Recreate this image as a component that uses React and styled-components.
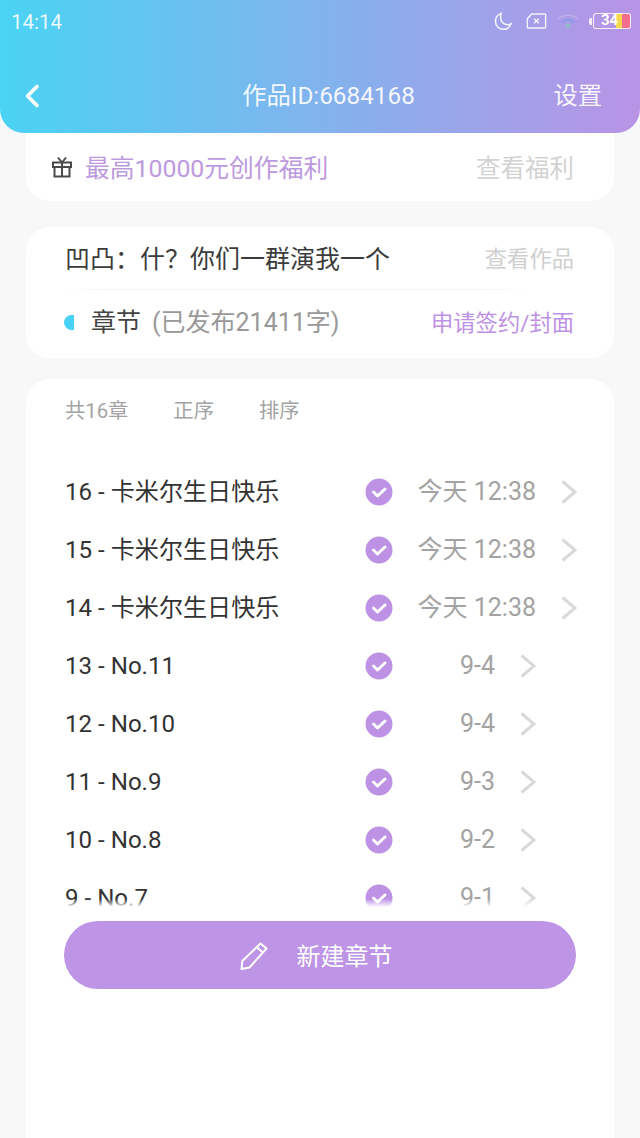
import React from "react";
import styled, { createGlobalStyle } from "styled-components";

const Global = createGlobalStyle`
  html, body { margin: 0; padding: 0; background: #f8f8f8; }
  body { font-family: Roboto, "Noto Sans CJK SC", sans-serif; line-height: 30px; }
  * { box-sizing: border-box; }
`;

const Page = styled.div`
  width: 640px;
  height: 1138px;
  overflow: hidden;
  display: flex;
  flex-direction: column;
  background: #f8f8f8;
`;

const Header = styled.header`
  position: relative;
  z-index: 2;
  height: 133px;
  flex: none;
  border-radius: 0 0 24px 24px;
  background: linear-gradient(90deg, #4ad3f4 0%, #b993e6 100%);
  color: #fff;
  display: flex;
  flex-direction: column;
`;

const StatusBar = styled.div`
  height: 44px;
  padding: 0 9px 2px 11px;
  display: flex;
  align-items: center;
  justify-content: space-between;
`;

const Time = styled.span`
  font-size: 20.5px;
  color: rgba(255, 255, 255, 0.88);
  margin-top: 2px;
`;

const StatusIcons = styled.div`
  display: flex;
  align-items: center;
`;

const Battery = styled.div`
  position: relative;
  width: 38px;
  height: 16px;
  margin-left: 1px;
  border: 1.5px solid rgba(255, 255, 255, 0.85);
  border-radius: 3px;
  overflow: hidden;
  background: linear-gradient(90deg, transparent 0 22px, #f6d84f 22px 28px, #f26d8e 28px);
  &::before {
    content: "34";
    position: absolute;
    left: 7px;
    top: -2px;
    font-size: 15px;
    line-height: 17px;
    font-weight: 700;
    color: #fff;
  }
`;

const BatteryTip = styled.span`
  width: 3px;
  height: 7px;
  margin-left: 10px;
  border-radius: 2px 0 0 2px;
  background: rgba(255, 255, 255, 0.85);
`;

const NavBar = styled.div`
  flex: 1;
  padding: 14px 38px 0 24px;
  display: flex;
  align-items: center;
  justify-content: space-between;
  font-size: 24.3px;
  color: rgba(255, 255, 255, 0.92);
`;

const NavTitle = styled.span`
  position: absolute;
  left: 0;
  right: 0;
  text-align: center;
  margin-left: 17px;
`;

const Cards = styled.main`
  flex: 1;
  min-height: 0;
  padding: 0 26px;
  display: flex;
  flex-direction: column;
`;

const PromoCard = styled.section`
  height: 68px;
  background: #fff;
  border-radius: 0 0 24px 24px;
  padding: 0 40px 0 26px;
  display: flex;
  align-items: center;
  font-size: 24.8px;
`;

const PromoText = styled.span`
  margin: 4px 0 0 13px;
  color: #bd9ade;
`;

const PromoLink = styled.span`
  margin: 4px 0 0 auto;
  font-size: 24.5px;
  color: #d2d2d2;
`;

const WorkCard = styled.section`
  margin-top: 26px;
  height: 131px;
  background: #fff;
  border-radius: 24px;
  padding: 0 40px 0 39px;
`;

const WorkRow = styled.div`
  height: 63px;
  display: flex;
  align-items: center;
  justify-content: space-between;
  border-bottom: 1px solid;
  border-image: linear-gradient(90deg, transparent, #f2f2f2 8%, #f2f2f2 80%, transparent 92%) 1;
  font-size: 25px;
  color: #3c3c3c;
`;

const WorkTitle = styled.span`
  margin-top: 4px;
`;

const WorkLink = styled.span`
  margin-top: 2px;
  font-size: 22.3px;
  color: #cfcfcf;
`;

const ChapterRow = styled.div`
  height: 65px;
  display: flex;
  align-items: center;
  font-size: 25px;
`;

const HalfDot = styled.span`
  width: 10px;
  height: 15px;
  margin: -1px 0 0 -1px;
  border-radius: 10px 0 0 10px;
  background: #48d2f4;
`;

const ChapterName = styled.span`
  margin-left: 17px;
  color: #444;
`;

const ChapterCount = styled.span`
  margin-left: 11px;
  color: #999;
`;

const ChapterLink = styled.span`
  margin-left: auto;
  font-size: 22.3px;
  color: #bd92e4;
`;

const ListCard = styled.section`
  margin-top: 21px;
  flex: 1;
  background: #fff;
  border-radius: 24px 24px 0 0;
  padding: 0 38px 0 39px;
`;

const ListHead = styled.div`
  height: 64px;
  display: flex;
  align-items: center;
  gap: 45px;
  font-size: 20.3px;
  color: #a3a3a3;
`;

const ListBody = styled.div`
  position: relative;
  height: 445px;
  margin: 20px -6px 0 0;
  overflow: hidden;
  &::after {
    content: "";
    position: absolute;
    left: 0;
    right: 0;
    bottom: 0;
    height: 9px;
    background: linear-gradient(180deg, rgba(255, 255, 255, 0), #fff 90%);
  }
`;

const Row = styled.div`
  height: 58px;
  display: flex;
  align-items: center;
`;

const RowTitle = styled.span`
  width: 300px;
  flex: none;
  font-size: 24.1px;
  color: #333;
`;

const RowCheck = styled.span`
  display: flex;
  flex: none;
`;

const RowDate = styled.span`
  width: ${(p) => (p.$wide ? 143 : 102)}px;
  flex: none;
  text-align: right;
  font-size: 25px;
  color: #a3a3a3;
`;

const RowChevron = styled.span`
  display: flex;
  flex: none;
  margin-left: 25px;
`;

const NewButton = styled.button`
  display: flex;
  width: 512px;
  height: 68px;
  margin: 13px 0 0 -1px;
  border: 0;
  border-radius: 34px;
  background: #bd94e6;
  color: #fff;
  font: inherit;
  font-size: 24px;
  align-items: center;
  justify-content: center;
  gap: 29px;
  padding: 0 8px 0 0;
`;

const ButtonIcon = styled.span`
  display: flex;
  margin-top: 2px;
`;

const ButtonLabel = styled.span`
  margin-top: 4px;
`;

const Moon = () => (
  <svg width="19" height="19" viewBox="0 0 20 20" fill="none" stroke="rgba(255,255,255,.88)" strokeWidth="1.6">
    <path d="M7.5 1.5C4 3 1.5 6.2 1.5 9.8c0 4.6 3.7 8.4 8.3 8.4 3.600 0 6.800-2.300 8-5.600-1 .6-2.200.9-3.400.9-4.200 0-7.400-3.200-7.400-7.200 0-1.600.2-3.200.5-4.800z" />
  </svg>
);

const SimX = () => (
  <svg width="21" height="16" viewBox="0 0 21 17" fill="none" stroke="rgba(255,255,255,.88)" strokeWidth="1.5" style={{ marginLeft: 13 }}>
    <path d="M5.500 1h13.500a1.200 1.200 0 0 1 1.200 1.200v12.600a1.200 1.200 0 0 1-1.200 1.200H2a1.200 1.200 0 0 1-1.200-1.200V6z" />
    <path d="M8 6l5 5M13 6l-5 5" />
  </svg>
);

const Wifi = () => (
  <svg width="22" height="19" viewBox="0 0 26 20" fill="none" style={{ marginLeft: 10 }}>
    <path d="M1.500 7C8 1 18 1 24.500 7" stroke="rgba(255,255,255,.22)" strokeWidth="1.800" />
    <path d="M5.500 11c4.500-4 10.500-4 15 0" stroke="#7d9ce0" strokeWidth="2" />
    <path d="M13 18.500l-4.300-4.500c2.500-2 6-2 8.600 0z" fill="#8fb8c8" />
  </svg>
);

const Back = () => (
  <svg width="18" height="26" viewBox="0 0 18 26" fill="none" stroke="#fff" strokeWidth="3.600" strokeLinecap="round" strokeLinejoin="round">
    <path d="M13 3.500L3.500 13 13 22.500" />
  </svg>
);

const Gift = () => (
  <svg width="20" height="22" viewBox="0 0 20 22" fill="none" stroke="#4a4a4a" strokeWidth="2">
    <path d="M1 6.500h18v4.500H1zM2.500 11v9.500h15V11M10 6.500v14" />
    <path d="M10 6.500L6 1.500M10 6.500l4-5" />
  </svg>
);

const Check = () => (
  <svg width="28" height="28" viewBox="0 0 28 28">
    <circle cx="14" cy="14" r="13.500" fill="#bd92e5" />
    <path d="M8.500 14l4 4 7.500-7" fill="none" stroke="#fff" strokeWidth="3" strokeLinecap="round" strokeLinejoin="round" />
  </svg>
);

const Chevron = () => (
  <svg width="16" height="24" viewBox="0 0 16 24" fill="none" stroke="#d9d9d9" strokeWidth="3">
    <path d="M1.500 1.500L14 12 1.500 22.500" />
  </svg>
);

const Pencil = () => (
  <svg width="28" height="28" viewBox="0 0 28 28" fill="none" stroke="#fff" strokeWidth="2" strokeLinejoin="round">
    <path d="M20.500 1.500l6 5L9.500 25.500 1.500 27l.8-8z" />
    <path d="M17 5.500l6 5" />
  </svg>
);

const rows = [
  ["16 - 卡米尔生日快乐", "今天 12:38", true],
  ["15 - 卡米尔生日快乐", "今天 12:38", true],
  ["14 - 卡米尔生日快乐", "今天 12:38", true],
  ["13 - No.11", "9-4"],
  ["12 - No.10", "9-4"],
  ["11 - No.9", "9-3"],
  ["10 - No.8", "9-2"],
  ["9 - No.7", "9-1"],
];

export default function App() {
  return (
    <Page>
      <Global />
      <Header>
        <StatusBar>
          <Time>14:14</Time>
          <StatusIcons>
            <Moon />
            <SimX />
            <Wifi />
            <BatteryTip />
            <Battery />
          </StatusIcons>
        </StatusBar>
        <NavBar>
          <Back />
          <NavTitle>作品ID:6684168</NavTitle>
          <span>设置</span>
        </NavBar>
      </Header>
      <Cards>
        <PromoCard>
          <Gift />
          <PromoText>最高10000元创作福利</PromoText>
          <PromoLink>查看福利</PromoLink>
        </PromoCard>
        <WorkCard>
          <WorkRow>
            <WorkTitle>凹凸：什？你们一群演我一个</WorkTitle>
            <WorkLink>查看作品</WorkLink>
          </WorkRow>
          <ChapterRow>
            <HalfDot />
            <ChapterName>章节</ChapterName>
            <ChapterCount>(已发布21411字)</ChapterCount>
            <ChapterLink>申请签约/封面</ChapterLink>
          </ChapterRow>
        </WorkCard>
        <ListCard>
          <ListHead>
            <span>共16章</span>
            <span>正序</span>
            <span>排序</span>
          </ListHead>
          <ListBody>
            {rows.map(([title, date, wide]) => (
              <Row key={title}>
                <RowTitle>{title}</RowTitle>
                <RowCheck>
                  <Check />
                </RowCheck>
                <RowDate $wide={wide}>{date}</RowDate>
                <RowChevron>
                  <Chevron />
                </RowChevron>
              </Row>
            ))}
          </ListBody>
          <NewButton>
            <ButtonIcon>
              <Pencil />
            </ButtonIcon>
            <ButtonLabel>新建章节</ButtonLabel>
          </NewButton>
        </ListCard>
      </Cards>
    </Page>
  );
}
